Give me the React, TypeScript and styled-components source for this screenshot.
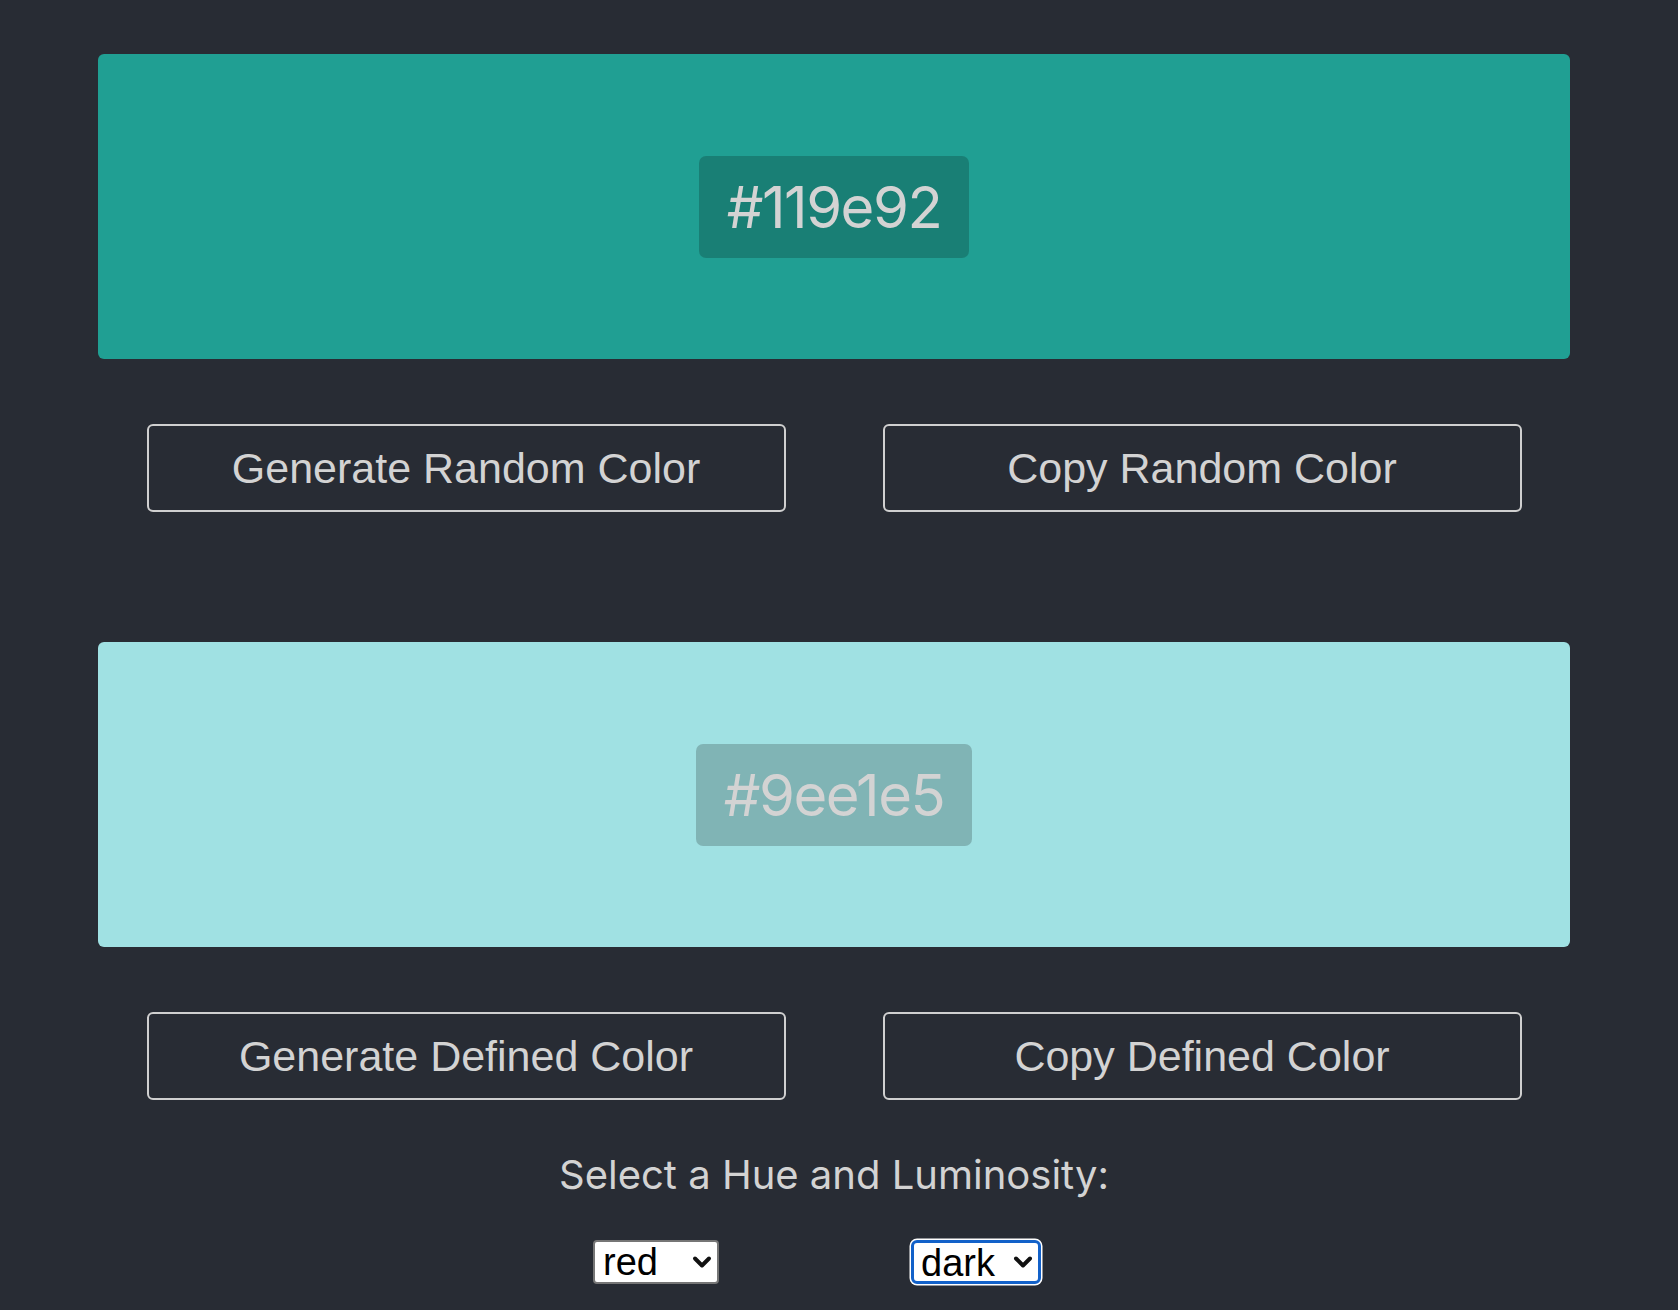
import React from "react";
import styled, { createGlobalStyle } from "styled-components";
import { ChevronDown } from "lucide-react";

const GlobalStyle = createGlobalStyle`
  html, body {
    margin: 0;
    padding: 0;
    background: #282c34;
  }
  body {
    font-family: Inter, "Noto Sans", sans-serif;
    color: #d3d3d3;
  }
`;

const Page = styled.div`
  width: 1668px;
  min-height: 1310px;
  box-sizing: border-box;
  padding: 54px 0 0 0;
  display: flex;
  flex-direction: column;
  align-items: center;
`;

const Section = styled.section<{ $gap?: number }>`
  display: flex;
  flex-direction: column;
  align-items: center;
  margin-top: ${(p) => p.$gap ?? 0}px;
`;

const Swatch = styled.div<{ $bg: string }>`
  width: 1472px;
  height: 305px;
  border-radius: 6px;
  background: ${(p) => p.$bg};
  display: flex;
  align-items: center;
  justify-content: center;
`;

const HexBadge = styled.div`
  height: 102px;
  padding: 0 28px;
  box-sizing: border-box;
  display: inline-flex;
  align-items: center;
  border-radius: 7px;
  background: rgba(0, 0, 0, 0.2);
  color: #d3d3d3;
  font-family: Inter, "Noto Sans", sans-serif;
  font-size: 58px;
  letter-spacing: -1.5px;
`;

const ButtonRow = styled.div`
  display: flex;
  gap: 97px;
  margin-top: 65px;
`;

const OutlineButton = styled.button`
  width: 639px;
  height: 88px;
  box-sizing: border-box;
  border: 2px solid #d0d0d0;
  border-radius: 6px;
  background: transparent;
  color: #d3d3d3;
  font-family: "Liberation Sans", Arial, sans-serif;
  font-size: 43px;
  cursor: pointer;
  padding: 0;
`;

const Prompt = styled.p`
  margin: 51px 0 0 0;
  font-family: Inter, "Noto Sans", sans-serif;
  font-size: 40px;
  line-height: 48px;
  color: #d3d3d3;
`;

const SelectRow = styled.div`
  display: flex;
  gap: 192px;
  margin-top: 41px;
  padding-right: 34px;
`;

const SelectWrap = styled.div`
  position: relative;
  display: inline-flex;
`;

const Select = styled.select<{ $focused?: boolean; $w: number }>`
  appearance: none;
  -webkit-appearance: none;
  width: ${(p) => p.$w}px;
  height: 44px;
  box-sizing: border-box;
  padding: 0 0 0 ${(p) => (p.$focused ? 7 : 8)}px;
  background: #fff;
  color: #000;
  font-family: "Liberation Sans", Arial, sans-serif;
  font-size: 38px;
  line-height: 40px;
  border: ${(p) => (p.$focused ? "3px solid #1261c9" : "2px solid #767676")};
  border-radius: ${(p) => (p.$focused ? 6 : 4)}px;
  box-shadow: ${(p) => (p.$focused ? "0 0 0 1.5px #ffffff" : "none")};
  outline: none;
`;

const Chevron = styled.span<{ $right: number }>`
  position: absolute;
  right: ${(p) => p.$right}px;
  top: 50%;
  transform: translateY(-50%);
  display: flex;
  pointer-events: none;
  color: #111;
`;

const HueSelect = ({ value, options, width, focused }: { value: string; options: string[]; width: number; focused?: boolean }) => (
  <SelectWrap>
    <Select value={value} onChange={() => undefined} $w={width} $focused={focused}>
      {options.map((o) => (
        <option key={o} value={o}>
          {o}
        </option>
      ))}
    </Select>
    <Chevron $right={focused ? 4 : 3}>
      <ChevronDown size={28} strokeWidth={3.4} />
    </Chevron>
  </SelectWrap>
);

export default function App() {
  return (
    <>
      <GlobalStyle />
      <Page>
        <Section>
          <Swatch $bg="#209f93">
            <HexBadge>#119e92</HexBadge>
          </Swatch>
          <ButtonRow>
            <OutlineButton>Generate Random Color</OutlineButton>
            <OutlineButton>Copy Random Color</OutlineButton>
          </ButtonRow>
        </Section>
        <Section $gap={130}>
          <Swatch $bg="#a0e1e3">
            <HexBadge>#9ee1e5</HexBadge>
          </Swatch>
          <ButtonRow>
            <OutlineButton>Generate Defined Color</OutlineButton>
            <OutlineButton>Copy Defined Color</OutlineButton>
          </ButtonRow>
          <Prompt>Select a Hue and Luminosity:</Prompt>
          <SelectRow>
            <HueSelect value="red" width={126} options={["red", "orange", "yellow", "green", "blue", "purple", "pink", "monochrome"]} />
            <HueSelect value="dark" width={130} focused options={["bright", "light", "dark"]} />
          </SelectRow>
        </Section>
      </Page>
    </>
  );
}
